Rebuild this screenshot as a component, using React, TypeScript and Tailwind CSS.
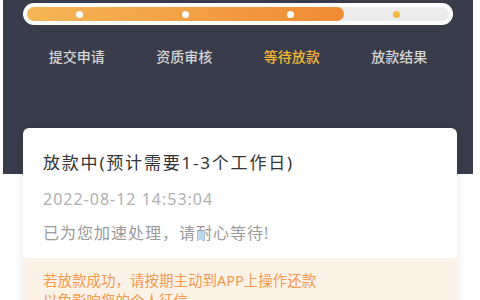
const steps = ["提交申请", "资质审核", "等待放款", "放款结果"];
const current = 2;

export default function App() {
  return (
    <div
      className="w-[480px] h-[300px] overflow-hidden bg-white"
      style={{ fontFamily: '"Noto Sans", "Noto Sans CJK SC", sans-serif' }}
    >
      {/* Header */}
      <div className="ml-[3px] w-[470px] h-[174px] bg-[#393d4b] pt-[3px]">
        <div className="mx-[20px] h-[22px] rounded-full bg-white p-[4px]">
          <div className="relative h-full rounded-full bg-[#ececec]">
            <div className="absolute left-0 top-0 h-full w-[75%] rounded-full bg-gradient-to-r from-[#f6b655] to-[#ef8b33]" />
            <div className="relative grid grid-cols-4 h-full">
              {steps.map((s, i) => (
                <div key={s} className="flex items-center justify-center">
                  <span
                    className={
                      i <= current
                        ? "w-[7px] h-[7px] rounded-full bg-white"
                        : "w-[7px] h-[7px] rounded-full bg-[#f6b93f]"
                    }
                  />
                </div>
              ))}
            </div>
          </div>
        </div>
        <div className="mx-[20px] mt-[22px] grid grid-cols-4">
          {steps.map((s, i) => (
            <div
              key={s}
              className={
                i === current
                  ? "text-center text-[14px] leading-[20px] font-medium text-[#f2b634]"
                  : "text-center text-[14px] leading-[20px] font-medium text-[#d4d4d4]"
              }
            >
              {s}
            </div>
          ))}
        </div>
      </div>

      {/* Status card */}
      <div className="relative mx-[23px] -mt-[46px] rounded-t-[6px] bg-white shadow-[0_0_12px_rgba(0,0,0,0.09)]">
        <div className="px-[20px] pt-[23px] pb-[14px]">
          <div className="text-[17px] leading-[24px] tracking-[1.8px] text-[#333333]">
            放款中(预计需要1-3个工作日)
          </div>
          <div className="mt-[13px] text-[16px] leading-[22px] tracking-[1px] text-[#b0b0b0]">
            2022-08-12 14:53:04
          </div>
          <div className="mt-[12px] text-[16px] leading-[22px] tracking-[1px] text-[#9a9a9a]">
            已为您加速处理，请耐心等待!
          </div>
        </div>
        <div className="bg-[#fdf2e8] px-[20px] pt-[12px] pb-[12px] text-[14.5px] leading-[20px] text-[#f29b4e]">
          <div>若放款成功，请按期主动到APP上操作还款</div>
          <div>以免影响您的个人征信</div>
        </div>
      </div>
    </div>
  );
}
